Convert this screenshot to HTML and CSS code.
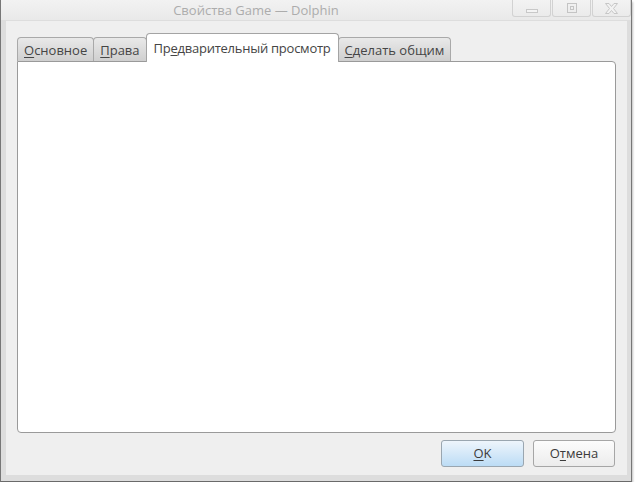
FILE: index.html
```html
<!DOCTYPE html>
<html lang="ru">
<head>
<meta charset="utf-8">
<title>Свойства Game — Dolphin</title>
<link rel="stylesheet" href="styles.css">
</head>
<body>
<div class="window">
  <div class="titlebar">
    <div class="title">Свойства Game — Dolphin</div>
    <div class="wbtns">
      <div class="wbtn">
        <svg width="12" height="6" viewBox="0 0 12 6"><rect x="0.5" y="1.5" width="11" height="3" fill="#f4f4f4" stroke="#c8c8c8"/></svg>
      </div>
      <div class="wbtn">
        <svg width="10" height="10" viewBox="0 0 10 10"><rect x="0.5" y="0.5" width="9" height="9" fill="none" stroke="#c4c4c4"/><rect x="3.5" y="3.5" width="3" height="3" fill="none" stroke="#c4c4c4"/></svg>
      </div>
      <div class="wbtn">
        <svg width="13" height="11" viewBox="0 0 13 11"><path d="M0.5 0.5h3.5l2.5 3 2.5-3h3.5l-4 5 4 5h-3.5l-2.5-3-2.5 3h-3.5l4-5z" fill="#f2f2f2" stroke="#c6c6c6"/></svg>
      </div>
    </div>
  </div>
  <div class="frame">
    <div class="content">
      <div class="tabs">
        <div class="tab"><span class="u">О</span>сновное</div>
        <div class="tab"><span class="u">П</span>рава</div>
        <div class="tab active">Пр<span class="u">е</span>дварительный просмотр</div>
        <div class="tab"><span class="u">С</span>делать общим</div>
      </div>
      <div class="panel"></div>
      <div class="buttons">
        <div class="btn default"><span class="u">O</span>K</div>
        <div class="btn">О<span class="u">т</span>мена</div>
      </div>
    </div>
  </div>
</div>
</body>
</html>
```

FILE: styles.css
```css
html, body {
  margin: 0;
  padding: 0;
  background: #ffffff;
}
body {
  font-family: "Open Sans", "DejaVu Sans", sans-serif;
  font-size: 13px;
  color: #3b3b3b;
}
.window {
  width: 630px;
  height: 481px;
  border-left: 1px solid #777;
  border-right: 1px solid #777;
  border-bottom: 1px solid #6a6a6a;
  background: #dddddd;
  display: flex;
  flex-direction: column;
  box-shadow: 1px 2px 2px rgba(0,0,0,0.25);
}
.titlebar {
  height: 20px;
  background: linear-gradient(#f2f2f2, #e9e9e9);
  display: flex;
  align-items: flex-start;
}
.title {
  flex: 1;
  text-align: center;
  color: #acacac;
  font-size: 13px;
  line-height: 20px;
}
.wbtns {
  display: flex;
}
.wbtn {
  width: 37px;
  height: 16px;
  border: 1px solid #d2d2d2;
  border-top: none;
  border-radius: 0 0 3px 3px;
  background: linear-gradient(#f3f3f3, #ebebeb);
  margin-left: 1px;
  display: flex;
  align-items: center;
  justify-content: center;
}
.wbtn:first-child svg { margin-top: 5px; }
.frame {
  flex: 1;
  padding: 1px 4px 6px 5px;
  display: flex;
}
.content {
  flex: 1;
  background: #efefef;
  padding: 12px 11px 8px 11px;
  display: flex;
  flex-direction: column;
}
.tabs {
  display: flex;
  align-items: flex-end;
  height: 28px;
  position: relative;
  z-index: 1;
}
.tab {
  height: 24px;
  line-height: 24px;
  padding: 0 6px;
  border: 1px solid #a9a9a9;
  border-bottom: none;
  border-radius: 4px 4px 0 0;
  background: linear-gradient(#e9e9e9, #cfcfcf);
  color: #454545;
  margin-right: -1px;
  box-sizing: border-box;
}
.tab.active {
  height: 29px;
  line-height: 28px;
  background: #ffffff;
  padding: 0 7px;
  margin-bottom: -1px;
  position: relative;
  z-index: 2;
  border-color: #a4a4a4;
  letter-spacing: -0.25px;
}
.u {
  text-decoration: underline;
  text-underline-offset: 2px;
}
.panel {
  flex: 1;
  background: #ffffff;
  border: 1px solid #9a9a9a;
  border-radius: 0 4px 4px 4px;
}
.buttons {
  display: flex;
  justify-content: flex-end;
  gap: 9px;
  margin-top: 7px;
  padding-right: 1px;
}
.btn {
  width: 80px;
  height: 25px;
  line-height: 25px;
  text-align: center;
  border: 1px solid #a6a6a6;
  border-radius: 3px;
  background: linear-gradient(#fcfcfc, #ececec);
  color: #3b3b3b;
}
.btn.default {
  width: 81px;
  background: linear-gradient(#eef5fc, #bcdcf5);
  border-color: #9aa6b0;
}
```
